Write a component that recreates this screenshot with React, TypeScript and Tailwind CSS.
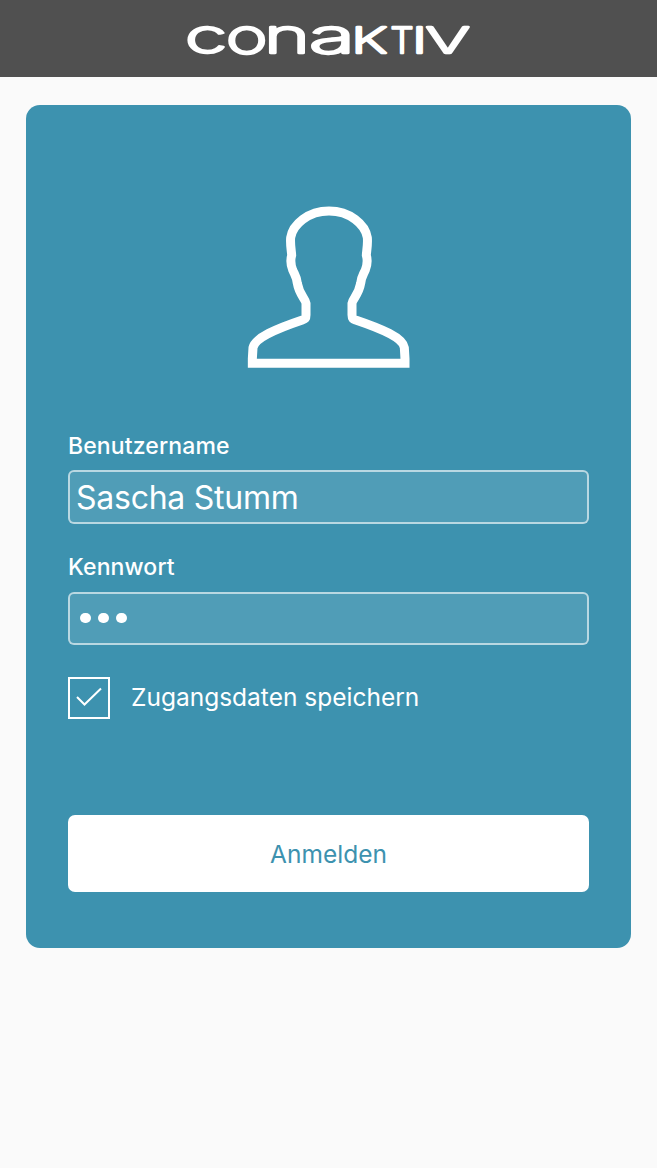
const LETTERS = [
  { char: 'c', x: 185, width: 42, size: 46.5 },
  { char: 'o', x: 226, width: 41.5, size: 46.5 },
  { char: 'n', x: 264, width: 46, size: 46.5 },
  { char: 'a', x: 309, width: 46, size: 46.5 },
  { char: 'K', x: 351.5, width: 35.5, size: 35 },
  { char: 'T', x: 390.5, width: 23, size: 35 },
  { char: 'I', x: 412, width: 15, size: 35 },
  { char: 'V', x: 426, width: 43.5, size: 35 },
];

function Logo() {
  return (
    <svg className="block h-[77px] w-[657px]" viewBox="0 0 657 77" role="img" aria-label="conaKTIV">
      <g fill="white" stroke="white" strokeWidth="2.5" strokeLinejoin="round" fontFamily="Inter, sans-serif" fontWeight="200">
        {LETTERS.map((l) => (
          <text key={l.char} x={l.x} y="52.8" fontSize={l.size} textLength={l.width} lengthAdjust="spacingAndGlyphs">
            {l.char}
          </text>
        ))}
      </g>
    </svg>
  );
}

function Avatar() {
  return (
    <svg className="block size-[180px]" viewBox="0 0 540 540" fill="none" stroke="white" strokeWidth="27" aria-hidden="true">
      <path d="M37 505V492L39 458C45 428 110 401 187 375C196 372 198 371 198 360V325C196 310 178 300 172 265C169 242 165 241 158 225C153 212 150 198 155 181C155 172 150 150 152 128C158 88 205 48 267 48C329 48 376 88 382 128C384 150 379 172 379 181C384 198 381 212 376 225C369 241 365 242 362 265C356 300 338 310 336 325V360C336 371 339 372 347 375C424 401 489 428 493 458L495 492V505Z" />
    </svg>
  );
}

export default function App() {
  return (
    <div className="min-h-[1168px] w-[657px] bg-[#fafafa] font-['Inter',sans-serif] text-white">
      <header className="h-[77px] bg-[#505050]">
        <Logo />
      </header>
      <main className="mx-[26px] mt-7 flex h-[843px] flex-col rounded-[14px] bg-[#3d92af] px-[42px]">
        <div className="mt-[90px] flex justify-center pl-[2px]">
          <Avatar />
        </div>
        <label className="mt-[55px] h-10 text-[23px] leading-8 font-medium tracking-[0.12px]">Benutzername</label>
        <div className="flex h-[54px] items-center rounded-md border-2 border-white/60 bg-white/10 px-[6px] pt-px text-[32px] tracking-[-0.25px]">
          Sascha Stumm
        </div>
        <label className="mt-[27px] h-[41px] text-[23px] leading-8 font-medium tracking-[0.12px]">Kennwort</label>
        <div className="flex h-[53px] items-center gap-[7.5px] rounded-md border-2 border-white/60 bg-white/10 px-[10px] pb-px">
          <span className="size-[10.5px] shrink-0 rounded-full bg-white" />
          <span className="size-[10.5px] shrink-0 rounded-full bg-white" />
          <span className="size-[10.5px] shrink-0 rounded-full bg-white" />
        </div>
        <div className="mt-8 flex items-center gap-[21px]">
          <span className="flex size-[42px] items-center justify-center border-2 border-white">
            <svg className="size-[38px]" viewBox="0 0 38 38" fill="none" stroke="white" strokeWidth="2" aria-hidden="true">
              <path d="M7 18L14.5 25.5L31 9.5" />
            </svg>
          </span>
          <span className="pb-[2px] text-[24.5px] leading-10">Zugangsdaten speichern</span>
        </div>
        <button className="mt-24 h-[77px] rounded-[7px] bg-white pt-0.5 text-[24.5px] text-[#3d92af]">Anmelden</button>
      </main>
    </div>
  );
}
